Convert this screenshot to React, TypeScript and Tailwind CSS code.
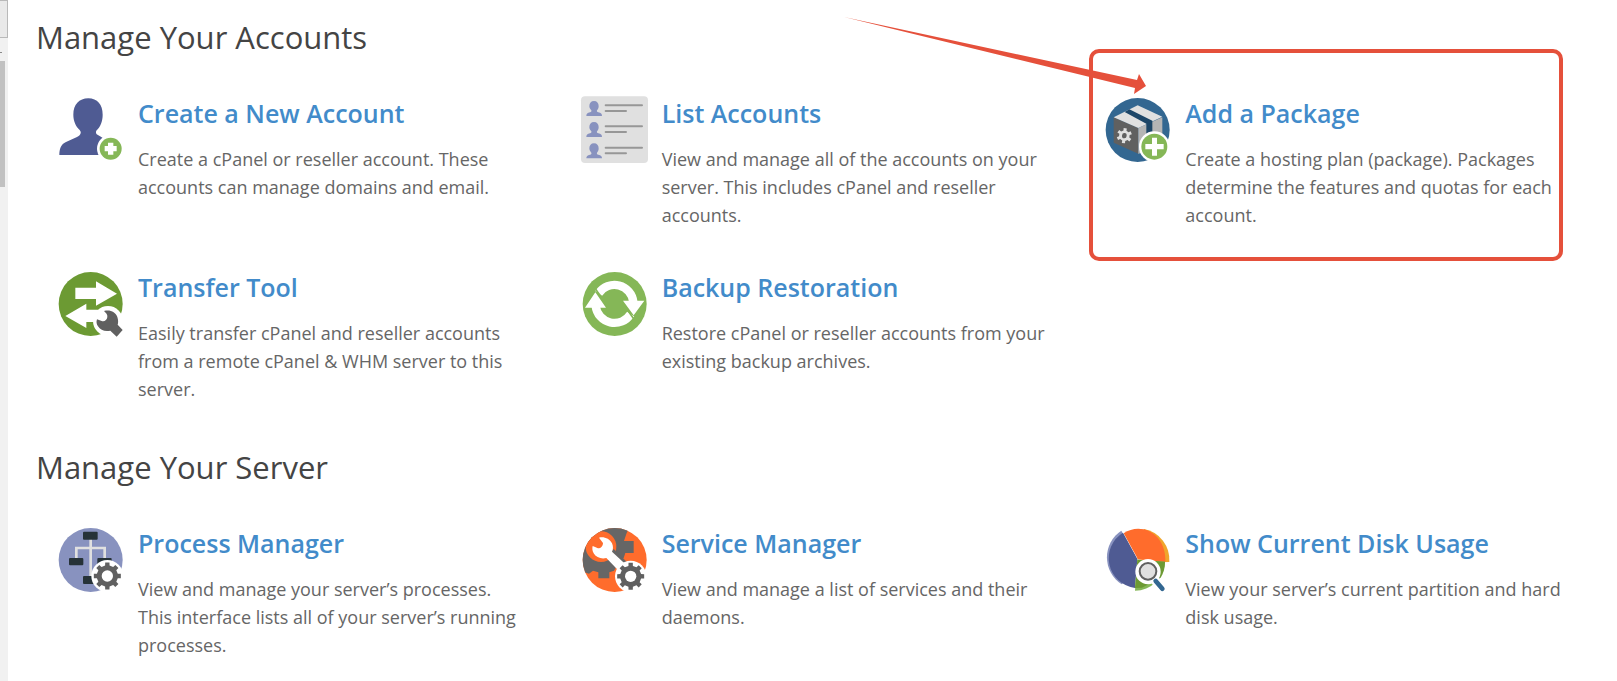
import React from "react";

// Outline of a gear with flat teeth, centred on cx/cy
const gearPath = (cx: number, cy: number, inner: number, outer: number, teeth: number) => {
  const step = (Math.PI * 2) / teeth;
  const points: string[] = [];
  for (let i = 0; i < teeth; i++) {
    const a = i * step - Math.PI / 2;
    [
      [inner, -0.27],
      [outer, -0.2],
      [outer, 0.2],
      [inner, 0.27],
    ].forEach(([r, k]) => {
      points.push(
        `${(cx + r * Math.cos(a + k * step)).toFixed(1)} ${(cy + r * Math.sin(a + k * step)).toFixed(1)}`
      );
    });
  }
  return `M${points.join("L")}Z`;
};

const Icon = ({ viewBox, children }: { viewBox: string; children: React.ReactNode }) => (
  <svg className="w-16 h-16 mt-1 shrink-0 overflow-visible" viewBox={viewBox} aria-hidden="true">
    {children}
  </svg>
);

const NewAccountIcon = () => (
  <Icon viewBox="25 30 192 192">
    <path
      fill="#4f5b93"
      d="M116 31c27 0 43 19 43 49 0 20-7 37-18 47-3 3-3 9 0 12l34 20-20 42H29c0-18 5-33 20-39l33-15c12-6 14-14 8-21-12-12-19-27-19-46 0-30 17-49 45-49Z"
    />
    <circle cx="183" cy="182" r="41" fill="#fff" />
    <circle cx="183" cy="182" r="33" fill="#85b757" />
    <path fill="#fff" d="M175 164h16v10h10v16h-10v10h-16v-10h-10v-16h10Z" />
  </Icon>
);

const ListIcon = () => (
  <Icon viewBox="36 30 192 192">
    <rect x="33" y="25" width="201" height="200" rx="12" fill="#e0e0e0" />
    {[0, 63, 127].map((y) => (
      <g key={y} transform={`translate(0 ${y})`}>
        <path
          fill="#8892bf"
          d="M72 39c9 0 14 6 14 15 0 6-2 10-5 13-1 3 0 5 4 6 8 2 11 4 11 11H49c0-7 3-9 11-11 4-1 5-3 4-6-4-4-6-8-6-13 0-9 5-15 14-15Z"
        />
        <path stroke="#979797" strokeWidth="6" strokeLinecap="round" d="M107 52h109M107 69h61" />
      </g>
    ))}
  </Icon>
);

const PackageIcon = () => (
  <Icon viewBox="31 30 192 192">
    <circle cx="129" cy="126" r="96" fill="#336791" />
    <path fill="#606060" d="M57 88l74 32v77l-74-33Z" />
    <path fill="#b5b5b5" d="M131 120l72-32v77l-72 33Z" />
    <path fill="#e0e0e0" d="M57 88l72-36 74 34-72 34Z" />
    <path fill="#1d4668" d="M90 72l14-8 69 34v42l-18 10v-43Z" />
    <path fill="#e0e0e0" fillRule="evenodd" transform="rotate(7 89 143)" d={gearPath(89, 143, 16, 23, 6) + "M96 143a7 8 0 1 0-14 0a7 8 0 1 0 14 0Z"} />
    <circle cx="179" cy="176" r="46" fill="#fff" />
    <circle cx="179" cy="176" r="39" fill="#85b757" />
    <path fill="#fff" d="M172 149h15v19h20v16h-20v19h-15v-19h-20v-16h20Z" />
  </Icon>
);

const TransferIcon = () => (
  <Icon viewBox="25 30 192 192">
    <circle cx="123" cy="126" r="96" fill="#6c9a33" />
    <path fill="#fff" d="M77 77h62V58l63 37-63 36v-20H77ZM110 125v18h80v37h-80v18l-63-36Z" />
    <circle cx="175" cy="177" r="45" fill="#fff" />
    <path
      fill="#606060"
      d="M163 147c18-5 35 3 40 18 3 9 3 16 1 23l15 16-18 20-19-18c-15 4-30-1-37-13-4-6-6-13-3-21l14 5c8 3 16-3 17-12 1-7-4-12-10-18Z"
    />
  </Icon>
);

const BackupIcon = () => (
  <Icon viewBox="36 30 192 192">
    <circle cx="134" cy="126" r="96" fill="#85b757" />
    <path fill="none" stroke="#fff" strokeWidth="25" d="M86 94A57 57 0 0 1 190 120M182 156A57 57 0 0 1 77 132" />
    <path fill="#fff" d="M159 116h64l-32 44ZM45 137h63L76 91Z" />
    <path stroke="#85b757" strokeWidth="5" d="M75 79l20 28M173 145l18 25" />
  </Icon>
);

const ProcessIcon = () => (
  <Icon viewBox="25 27 192 192">
    <circle cx="123" cy="123" r="96" fill="#8892bf" />
    <path fill="none" stroke="#e0e0e0" strokeWidth="8" d="M123 58v118M80 120V87h85v33" />
    <g fill="#263238">
      <rect x="100" y="38" width="44" height="24" rx="3" />
      <rect x="58" y="117" width="43" height="22" rx="3" />
      <rect x="143" y="117" width="43" height="22" rx="3" />
      <rect x="100" y="171" width="44" height="24" rx="3" />
    </g>
    <circle cx="173" cy="171" r="48" fill="#fff" />
    <path fill="#606060" d={gearPath(173, 171, 32, 41, 8)} />
    <circle cx="173" cy="171" r="17" fill="#fff" />
  </Icon>
);

const ServiceIcon = () => (
  <Icon viewBox="36 27 192 192">
    <clipPath id="service-disc">
      <circle cx="134" cy="123" r="96" />
    </clipPath>
    <g clipPath="url(#service-disc)">
      <path fill="#ff6c2c" d="M30 20h210v210H30Z" />
      <path
        fill="#666"
        d="M88 20h92l-10 22-8 24h29v36h-25l-5 15-16 16-13 22-14 5v18H85v-18l-16-5-12 9-17-6-10-30V20Z"
      />
      <circle cx="93" cy="83" r="46" fill="#ff6c2c" />
      <path stroke="#666" strokeWidth="32" d="M120 101l43 43" />
    </g>
    <path
      fill="#fff"
      d="M87 56c15-4 32 3 39 17 4 9 4 18 0 25l55 51-20 22-52-54c-15 4-31-2-38-14-4-7-5-15-3-22l16 7c9 0 15-7 15-16Z"
    />
    <circle cx="182" cy="172" r="47" fill="#fff" />
    <path fill="#606060" d={gearPath(182, 172, 32, 41, 8)} />
    <circle cx="182" cy="172" r="17" fill="#fff" />
  </Icon>
);

const DiskIcon = () => (
  <Icon viewBox="32 27 192 192">
    <path fill="#8892bf" d="M129 122L81 35A96 96 0 0 0 82 196l16-14Z" />
    <path fill="#4f5b93" d="M129 120L86 41A90 90 0 0 0 122 207Z" />
    <path fill="#f0a52b" d="M129 120l20-90A94 94 0 0 1 225 129l-30 1Z" />
    <path fill="#ff6c2c" d="M131 121L88 43C120 20 165 26 191 57 206 76 214 100 213 129Z" />
    <path fill="#85b757" d="M129 122l83 6A91 91 0 0 1 122 215Z" />
    <path fill="#6c9a33" d="M129 122l83 6c0 20-5 35-13 48l-56 30-21 1Z" />
    <circle cx="161" cy="158" r="38" fill="#fff" />
    <path stroke="#fff" strokeWidth="27" strokeLinecap="round" d="M184 187l20 22" />
    <path stroke="#336791" strokeWidth="14" strokeLinecap="round" d="M184 186l20 23" />
    <circle cx="161" cy="157" r="25" fill="#e0e0e0" stroke="#606060" strokeWidth="6" />
  </Icon>
);

const sections = [
  {
    title: "Manage Your Accounts",
    items: [
      { name: "Create a New Account", icon: <NewAccountIcon />, text: "Create a cPanel or reseller account. These accounts can manage domains and email." },
      { name: "List Accounts", icon: <ListIcon />, text: "View and manage all of the accounts on your server. This includes cPanel and reseller accounts." },
      { name: "Add a Package", icon: <PackageIcon />, marked: true, text: "Create a hosting plan (package). Packages determine the features and quotas for each account." },
      { name: "Transfer Tool", icon: <TransferIcon />, text: "Easily transfer cPanel and reseller accounts from a remote cPanel & WHM server to this server." },
      { name: "Backup Restoration", icon: <BackupIcon />, text: "Restore cPanel or reseller accounts from your existing backup archives." },
    ],
  },
  {
    title: "Manage Your Server",
    items: [
      { name: "Process Manager", icon: <ProcessIcon />, text: "View and manage your server’s processes. This interface lists all of your server’s running processes." },
      { name: "Service Manager", icon: <ServiceIcon />, text: "View and manage a list of services and their daemons." },
      { name: "Show Current Disk Usage", icon: <DiskIcon />, text: "View your server’s current partition and hard disk usage." },
    ],
  },
];

// Red frame and arrow that point out one tool
const Marker = () => (
  <>
    <div className="absolute -top-[45px] left-[6px] right-[44px] h-[212px] border-4 border-[#e5503b] rounded-[10px] pointer-events-none" />
    <svg
      className="absolute -top-[78px] -left-[239px] w-[304px] h-[80px] pointer-events-none"
      viewBox="0 0 304 80"
      aria-hidden="true"
    >
      <path fill="#e5503b" d="M0 1L293 64 295 58 302 70 290 78 291 72Z" />
    </svg>
  </>
);

const App = () => {
  return (
    <div className="flex min-h-screen bg-white font-['Open_Sans',sans-serif]">
      <div className="w-2 shrink-0 bg-[#f1f1f1]" aria-hidden="true">
        <div className="h-[38px] bg-[#e9e9e9] border-r border-y border-[#b9b9b9]" />
        <div className="h-px w-0.5 mt-3.5 bg-[#8a8a8a]" />
        <div className="h-[126px] w-[5px] mt-2 bg-[#c1c1c1]" />
      </div>
      <main className="flex-1 pt-[17px] pl-7 pr-2.5">
        {sections.map((section) => (
          <section key={section.title} className="mb-11 last:mb-0">
            <h2 className="text-[31px] leading-10 text-[#444] mb-[37px]">{section.title}</h2>
            <div className="grid grid-cols-3 gap-y-[39px]">
              {section.items.map((item) => (
                <div key={item.name} className="relative flex gap-4 pl-[22px] pr-8">
                  {item.icon}
                  <div>
                    <h3 className="text-[25px] leading-[38px] font-semibold mb-[13px]">
                      <a href="#" className="text-[#428bca]">
                        {item.name}
                      </a>
                    </h3>
                    <p className="text-[18px] leading-7 text-[#666]">{item.text}</p>
                  </div>
                  {item.marked && <Marker />}
                </div>
              ))}
            </div>
          </section>
        ))}
      </main>
    </div>
  );
};

export default App;
